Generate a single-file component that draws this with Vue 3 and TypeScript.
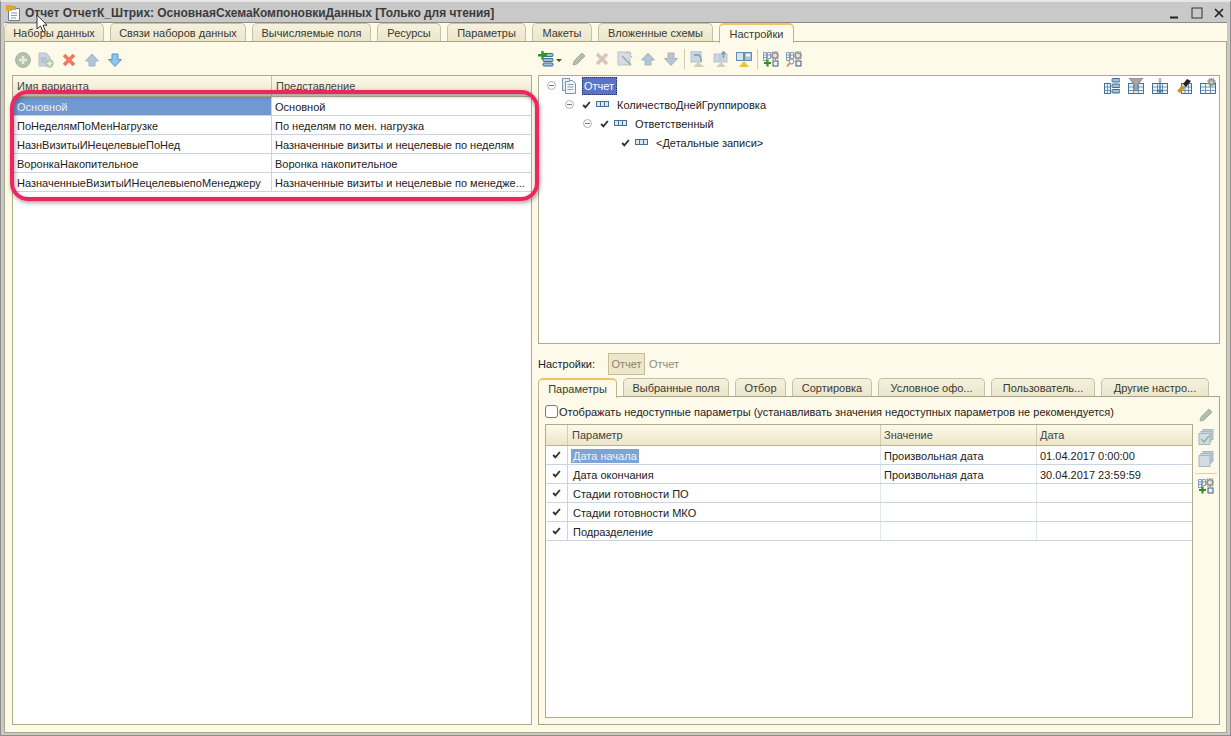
<script setup lang="ts">
const mainTabs = [
  { t: 'Наборы данных', w: 100 }, { t: 'Связи наборов данных', w: 136 }, { t: 'Вычисляемые поля', w: 119 },
  { t: 'Ресурсы', w: 64 }, { t: 'Параметры', w: 79 }, { t: 'Макеты', w: 60 }, { t: 'Вложенные схемы', w: 115 },
  { t: 'Настройки', w: 75, on: true },
]
const subTabs = [
  { t: 'Параметры', w: 79, on: true }, { t: 'Выбранные поля', w: 106 }, { t: 'Отбор', w: 51 }, { t: 'Сортировка', w: 80 },
  { t: 'Условное офо...', w: 107 }, { t: 'Пользователь...', w: 104 }, { t: 'Другие настро...', w: 108 },
]
const variants = [
  ['Основной', 'Основной'],
  ['ПоНеделямПоМенНагрузке', 'По неделям по мен. нагрузка'],
  ['НазнВизитыИНецелевыеПоНед', 'Назначенные визиты и нецелевые по неделям'],
  ['ВоронкаНакопительное', 'Воронка накопительное'],
  ['НазначенныеВизитыИНецелевыепоМенеджеру', 'Назначенные визиты и нецелевые по менедже...'],
]
const params = [
  ['Дата начала', 'Произвольная дата', '01.04.2017 0:00:00'],
  ['Дата окончания', 'Произвольная дата', '30.04.2017 23:59:59'],
  ['Стадии готовности ПО', '', ''],
  ['Стадии готовности МКО', '', ''],
  ['Подразделение', '', ''],
]
const leftTools = ['add', 'adddoc', 'del', 'up', 'down']
const treeTools = ['cols', 'filter', 'sortc', 'brush', 'gearc']
</script>

<template>
  <div class="win">
    <svg class="sprite" width="0" height="0">
      <symbol id="add" viewBox="0 0 16 16"><circle cx="8" cy="8" r="7.4" fill="#b5c2ab" stroke="#a3b09a"/><path d="M8 4v8M4 8h8" stroke="#e6ebdf" stroke-width="2.4"/></symbol>
      <symbol id="adddoc" viewBox="0 0 16 16"><path d="M1 1h7l4 4v9H1z" fill="#c6d2dc" stroke="#b4c0ca"/><path d="M3 6h6M3 8h5M3 10h4" stroke="#a9b7c4"/><circle cx="11.5" cy="11.5" r="4.2" fill="#b5c5ab"/><path d="M11.5 9v5M9 11.5h5" stroke="#eef2e8" stroke-width="1.5"/></symbol>
      <symbol id="del" viewBox="0 0 16 16"><path d="M3 3l10 10M13 3L3 13" stroke="#ef7a62" stroke-width="3.6"/></symbol>
      <symbol id="up" viewBox="0 0 16 16"><path d="M8 2l6.5 7H11v5H5V9H1.500z" fill="#b4c6d4" stroke="#a0b4c4"/></symbol>
      <symbol id="down" viewBox="0 0 16 16"><path d="M8 14.500L1.500 7.500H5V2h6v5.500h3.500z" fill="#90c4ec" stroke="#5a96c8"/></symbol>
      <symbol id="gdown" viewBox="0 0 16 16"><path d="M8 14.500L1.500 7.500H5V2h6v5.500h3.500z" fill="#b7c6d2" stroke="#a3b4c2"/></symbol>
      <symbol id="addgrp" viewBox="0 0 16 16"><rect x="5" y="2.500" width="10" height="3" rx="1" fill="#9cc0dc" stroke="#3d6c94"/><rect x="5" y="7.500" width="10" height="3" rx="1" fill="#9cc0dc" stroke="#3d6c94"/><rect x="5" y="12" width="10" height="3" rx="1" fill="#9cc0dc" stroke="#3d6c94"/><path d="M4.500 0v8.500M0 4.200h9" stroke="#2a9a24" stroke-width="2.400"/></symbol>
      <symbol id="pencil" viewBox="0 0 16 16"><path d="M2 14l1-4 8-8 3 3-8 8z" fill="#b2bfa8" stroke="#a4b09a"/></symbol>
      <symbol id="gx" viewBox="0 0 16 16"><path d="M3 3l10 10M13 3L3 13" stroke="#d5c4b8" stroke-width="3.400"/></symbol>
      <symbol id="wand" viewBox="0 0 16 16"><rect x="1" y="1" width="12" height="13" fill="#d5dde2" stroke="#b9c3ca"/><path d="M5 5l9 9" stroke="#9aa6b0" stroke-width="1.400"/><path d="M13 2l1 1M15 5l-1 1M10 1l1 1" stroke="#dca09a" stroke-width="1.400"/></symbol>
      <symbol id="undo" viewBox="0 0 16 16"><rect x="1" y="0" width="10" height="11" fill="#c8d6e0" stroke="#b5c4d0"/><path d="M4 4h5l2 3v4" fill="none" stroke="#7f98ac" stroke-width="1.300"/><path d="M8 11l-5 5h12z" fill="#d4cfb8"/></symbol>
      <symbol id="book" viewBox="0 0 16 16"><rect x="1" y="3" width="6" height="8" fill="#c8d6e0" stroke="#b5c4d0"/><rect x="8" y="3" width="6" height="8" fill="#c8d6e0" stroke="#b5c4d0"/><path d="M10.500 7V2M8.500 3l2-2.500 2 2.500" fill="none" stroke="#7f98ac" stroke-width="1.300"/><path d="M8 11l-5 5h10z" fill="#d4cfb8"/></symbol>
      <symbol id="save" viewBox="0 0 16 16"><rect x="0.500" y="1.500" width="7" height="8" fill="#d4e4f0" stroke="#6a8aa6"/><rect x="8.500" y="1.500" width="7" height="8" fill="#a8c4da" stroke="#6a8aa6"/><rect x="10" y="3" width="4" height="2.500" fill="#eef4f8"/><path d="M8 10l-5 6h10z" fill="#f0c040"/></symbol>
      <symbol id="gearadd" viewBox="0 0 16 16"><path d="M.5 1.500h3v8h-3zM4.500 1.500h3v6h-3zM.5 4h3M.5 6.500h3M4.500 4h3" fill="#f2f6f9" stroke="#6a8aa8" stroke-width=".8"/><rect x="10" y="10" width="5" height="5" fill="#eef3f7" stroke="#3a5a7c"/><circle cx="12" cy="4.500" r="2.800" fill="#e4e4e4" stroke="#949494" stroke-width="1.600"/><circle cx="12" cy="4.500" r="4.100" fill="none" stroke="#949494" stroke-width="1.400" stroke-dasharray="1.300 1.270"/><path d="M4.500 8.500v7M1 12h7" stroke="#28961e" stroke-width="2.200"/></symbol>
      <symbol id="gearfind" viewBox="0 0 16 16"><path d="M.5 1.500h3v8h-3zM4.500 1.500h3v6h-3zM.5 4h3M.5 6.500h3M4.500 4h3" fill="#f2f6f9" stroke="#6a8aa8" stroke-width=".8"/><rect x="10" y="10" width="5" height="5" fill="#eef3f7" stroke="#3a5a7c"/><circle cx="12" cy="4.500" r="2.800" fill="#e4e4e4" stroke="#949494" stroke-width="1.600"/><circle cx="12" cy="4.500" r="4.100" fill="none" stroke="#949494" stroke-width="1.400" stroke-dasharray="1.300 1.270"/><circle cx="5.500" cy="10.500" r="2.500" fill="#eef2f4" stroke="#a08060"/><path d="M3.500 12.500L1 15.500" stroke="#c08a5c" stroke-width="1.600"/></symbol>
      <symbol id="cols" viewBox="0 0 16 16"><rect x="0.500" y="5.500" width="6" height="10" fill="#eef3f7" stroke="#46719a"/><path d="M3.500 5.500v10M.5 9h6M.5 12.500h6" stroke="#46719a" stroke-width=".7"/><rect x="8" y="0.500" width="8" height="3.500" rx="1" fill="#9cc0dc" stroke="#3d6c94"/><rect x="8" y="6" width="8" height="3.500" rx="1" fill="#9cc0dc" stroke="#3d6c94"/><rect x="8" y="11.500" width="8" height="3.500" rx="1" fill="#9cc0dc" stroke="#3d6c94"/></symbol>
      <symbol id="filter" viewBox="0 0 16 16"><rect x="0.500" y="5.500" width="15" height="10" fill="#eef3f7" stroke="#46719a"/><path d="M5.500 5.500v10M10.500 5.500v10M.5 9h15M.5 12.500h15" stroke="#46719a" stroke-width=".7"/><path d="M1 0h14L9.500 7v6h-3V7z" fill="#a6a6a6" stroke="#8a8a8a"/></symbol>
      <symbol id="sortc" viewBox="0 0 16 16"><rect x="0.500" y="5.500" width="15" height="10" fill="#eef3f7" stroke="#46719a"/><path d="M5.500 5.500v10M10.500 5.500v10M.5 9h15M.5 12.500h15" stroke="#46719a" stroke-width=".7"/><path d="M8 3v11M5.500 11.500L8 14.500l2.500-3" fill="none" stroke="#3878b0" stroke-width="1.300"/><path d="M6.500 0l3 3M9.500 0l-3 3" stroke="#777" stroke-width=".8"/></symbol>
      <symbol id="brush" viewBox="0 0 16 16"><rect x="5.500" y="5.500" width="10" height="10" fill="#eef3f7" stroke="#46719a"/><path d="M9 5.500v10M12.500 5.500v10M5.500 9h10M5.500 12.500h10" stroke="#46719a" stroke-width=".7"/><path d="M1 13l5-6 3 3-5 5z" fill="#c8962c"/><path d="M7 6l4-5 4 2-5 6z" fill="#222"/></symbol>
      <symbol id="gearc" viewBox="0 0 16 16"><rect x="0.500" y="5.500" width="15" height="10" fill="#eef3f7" stroke="#46719a"/><path d="M5.500 5.500v10M10.500 5.500v10M.5 9h15M.5 12.500h15" stroke="#46719a" stroke-width=".7"/><circle cx="11.500" cy="4" r="2.600" fill="#c8c8c8" stroke="#8f8f8f" stroke-width="1.500"/><circle cx="11.500" cy="4" r="3.700" fill="none" stroke="#8f8f8f" stroke-width="1.300" stroke-dasharray="1.200 1.120"/></symbol>
      <symbol id="doc" viewBox="0 0 16 16"><path d="M4.500 2.500h7l3 3v10h-10z" fill="#f2f6f9" stroke="#7b94ac"/><path d="M1.500 0.500h7v3h-4v9h-3z" fill="#e6edf3" stroke="#7b94ac"/><path d="M6.500 6.500h6M6.500 9h6M6.500 11.500h6" stroke="#8aa2b8"/></symbol>
      <symbol id="field" viewBox="0 0 13 6"><rect x="0.500" y="0.500" width="12" height="5" fill="#dbe7f1" stroke="#4a6f94"/><path d="M4.500 .5v5M8.500 .5v5" stroke="#4a6f94"/></symbol>
      <symbol id="chk" viewBox="0 0 12 10"><path d="M1.500 5l3 3 6-7" fill="none" stroke="#333" stroke-width="2.500"/></symbol>
      <symbol id="stack" viewBox="0 0 16 16"><rect x="5" y="0.500" width="10" height="10" fill="#bdcdd6" stroke="#a6b8c2"/><rect x="3" y="2.500" width="10" height="10" fill="#c8d6dd" stroke="#a6b8c2"/><rect x="1" y="4.500" width="11" height="11" fill="#d1dde3" stroke="#a6b8c2"/></symbol>
      <symbol id="stackchk" viewBox="0 0 16 16"><rect x="5" y="0.500" width="10" height="10" fill="#bdcdd6" stroke="#a6b8c2"/><rect x="3" y="2.500" width="10" height="10" fill="#c8d6dd" stroke="#a6b8c2"/><rect x="1" y="4.500" width="11" height="11" fill="#d1dde3" stroke="#a6b8c2"/><path d="M3 10l3 3 5-6" fill="none" stroke="#9ab78e" stroke-width="1.600"/></symbol>
    </svg>

    <header class="titlebar">
      <svg class="tb-icon" viewBox="0 0 16 16"><path d="M2.500 3.500h11v12h-11z" fill="#fff" stroke="#6a7c8c"/><rect x="0" y="0" width="6" height="6" fill="#e2a834"/><rect x="6" y="1" width="4" height="4" fill="#caa64c"/><path d="M5 8h6M5 10.500h6M5 13h5" stroke="#8a9aa8"/></svg>
      <span class="tb-title">Отчет ОтчетК_Штрих: ОсновнаяСхемаКомпоновкиДанных [Только для чтения]</span>
      <div class="tb-btns">
        <svg viewBox="0 0 12 12" class="wb"><rect x="1" y="9.500" width="8" height="2" fill="#222"/></svg>
        <svg viewBox="0 0 12 12" class="wb"><rect x="1" y="1" width="10" height="10" fill="none" stroke="#333"/></svg>
        <svg viewBox="0 0 12 12" class="wb"><path d="M2 2l8 8M10 2l-8 8" stroke="#222" stroke-width="1.700"/></svg>
      </div>
    </header>

    <div class="frame">
      <nav class="tabs main-tabs">
        <div v-for="t in mainTabs" :key="t.t" class="tab" :class="{ on: t.on }" :style="{ width: t.w + 'px' }">{{ t.t }}</div>
      </nav>
      <div class="panel main-panel">
        <section class="left">
          <div class="toolbar ltb">
            <svg v-for="i in leftTools" :key="i" class="ic"><use :href="'#' + i" /></svg>
          </div>
          <div class="vtable box">
            <div class="vhead">
              <div class="vh c1">Имя варианта</div>
              <div class="vh">Представление</div>
            </div>
            <div v-for="(r, i) in variants" :key="r[0]" class="vrow">
              <div class="vc c1" :class="{ sel: i === 0 }">{{ r[0] }}</div>
              <div class="vc">{{ r[1] }}</div>
            </div>
          </div>
        </section>

        <section class="right">
          <div class="toolbar rtb">
            <svg class="ic"><use href="#addgrp" /></svg>
            <span class="caret"></span>
            <svg class="ic t1"><use href="#pencil" /></svg>
            <svg class="ic t1"><use href="#gx" /></svg>
            <svg class="ic t1"><use href="#wand" /></svg>
            <svg class="ic t1"><use href="#up" /></svg>
            <svg class="ic t1"><use href="#gdown" /></svg>
            <span class="sep"></span>
            <svg class="ic t1"><use href="#undo" /></svg>
            <svg class="ic t1"><use href="#book" /></svg>
            <svg class="ic t1"><use href="#save" /></svg>
            <span class="sep"></span>
            <svg class="ic t1"><use href="#gearadd" /></svg>
            <svg class="ic t1"><use href="#gearfind" /></svg>
          </div>

          <div class="tree box">
            <div class="tnode n0">
              <span class="toggle"></span>
              <svg class="ic doc"><use href="#doc" /></svg>
              <span class="tsel">Отчет</span>
              <div class="tree-tools">
                <svg v-for="i in treeTools" :key="i" class="ic"><use :href="'#' + i" /></svg>
              </div>
            </div>
            <div class="tnode n1">
              <span class="toggle"></span>
              <svg class="chk"><use href="#chk" /></svg>
              <svg class="fld"><use href="#field" /></svg>
              <span class="tl">КоличествоДнейГруппировка</span>
            </div>
            <div class="tnode n2">
              <span class="toggle"></span>
              <svg class="chk"><use href="#chk" /></svg>
              <svg class="fld"><use href="#field" /></svg>
              <span class="tl">Ответственный</span>
            </div>
            <div class="tnode n3">
              <svg class="chk"><use href="#chk" /></svg>
              <svg class="fld"><use href="#field" /></svg>
              <span class="tl">&lt;Детальные записи&gt;</span>
            </div>
          </div>

          <div class="setrow">
            <span class="setlab">Настройки:</span>
            <span class="setbtn">Отчет</span>
            <span class="setdim">Отчет</span>
          </div>

          <nav class="tabs sub-tabs">
            <div v-for="t in subTabs" :key="t.t" class="tab" :class="{ on: t.on }" :style="{ width: t.w + 'px' }">{{ t.t }}</div>
          </nav>
          <div class="panel sub-panel">
            <div class="sub-main">
              <label class="cbrow">
                <span class="cb"></span>
                <span class="cbtext">Отображать недоступные параметры (устанавливать значения недоступных параметров не рекомендуется)</span>
              </label>
              <div class="ptable box">
                <div class="prow phead">
                  <div class="pc"></div>
                  <div class="pc">Параметр</div>
                  <div class="pc">Значение</div>
                  <div class="pc">Дата</div>
                </div>
                <div v-for="(r, i) in params" :key="r[0]" class="prow">
                  <div class="pc mark"><svg class="chk"><use href="#chk" /></svg></div>
                  <div class="pc pname"><span :class="{ psel: i === 0 }">{{ r[0] }}</span></div>
                  <div class="pc">{{ r[1] }}</div>
                  <div class="pc">{{ r[2] }}</div>
                </div>
              </div>
            </div>
            <div class="side">
              <svg class="ic"><use href="#pencil" /></svg>
              <svg class="ic"><use href="#stackchk" /></svg>
              <svg class="ic"><use href="#stack" /></svg>
              <span class="hsep"></span>
              <svg class="ic"><use href="#gearadd" /></svg>
            </div>
          </div>
        </section>
      </div>
    </div>

    <div class="annot"></div>
    <svg class="cursor" viewBox="0 0 12 19"><path d="M1 1v14l3.500-3 2.500 6 2.500-1-2.500-5.800H11z" fill="#fff" stroke="#333" stroke-width="1"/></svg>
  </div>
</template>

<style scoped>
.win {
  position: relative;
  width: 1231px;
  height: 736px;
  overflow: hidden;
  background: #c9c9c9;
  display: flex;
  flex-direction: column;
  font: 11px "Liberation Sans", Arial, sans-serif;
  color: #222;
  box-sizing: border-box;
  padding: 0 3px 2px 3px;
  border-top: 2px solid #e6e6e6;
  border-left: 1px solid #8e8e8e;
  border-right: 1px solid #8e8e8e;
  border-bottom: 1px solid #8e8e8e;
}
.sprite { position: absolute; }
.titlebar {
  box-sizing: border-box;
  height: 20px;
  padding-top: 2px;
  display: flex;
  align-items: center;
  flex: none;
}
.tb-icon { width: 16px; height: 16px; margin-left: 2px; margin-right: 3px; }
.tb-title { font-size: 12px; font-weight: 700; color: #3c3c3c; letter-spacing: -0.04px; }
.tb-btns { margin-left: auto; display: flex; gap: 10px; padding-right: 2px; align-items: center; }
.wb { width: 12px; height: 12px; }

.frame { flex: 1; min-height: 0; display: flex; flex-direction: column; background: #fdfaea; }
.main-tabs { background: #fdfaea; border-top: 1px solid #8c8c80; }
.tabs { display: flex; gap: 0; flex: none; height: 18px; }
.tab {
  box-sizing: border-box;
  height: 19px;
  display: flex;
  align-items: center;
  justify-content: center;
  white-space: nowrap;
  color: #3a3a32;
  background: linear-gradient(#f5f1de, #eae5c9);
  border: 1px solid #c6c1a4;
  border-bottom: none;
  border-radius: 5px 5px 0 0;
  background-clip: padding-box;
  margin-left: 6px;
}
.main-tabs .tab:first-child { margin-left: 0; }
.tab.on {
  background: #fdfaea;
  position: relative;
  z-index: 2;
  height: 20px;
  border-color: #bdb796;
  border-top: 2px solid #f2c46a;
}
.panel {
  box-sizing: border-box;
  border: 1px solid #aaa585;
  background: #fdfaea;
}
.main-panel {
  flex: 1;
  min-height: 0;
  display: flex;
  padding: 0 6px 7px 7px;
  gap: 6px;
}
.box { box-sizing: border-box; border: 1px solid #b0aa8c; background: #fff; }
.left { width: 520px; flex: none; display: flex; flex-direction: column; }
.toolbar { box-sizing: border-box; height: 33px; display: flex; align-items: center; flex: none; }
.ic { width: 16px; height: 16px; flex: none; }
.ltb { gap: 7px; padding-left: 3px; padding-top: 3px; }
.vtable { flex: 1; min-height: 0; }
.vhead, .vrow { display: grid; grid-template-columns: 259px 1fr; }
.vhead { height: 21px; background: linear-gradient(#fdfaea, #ece5c8); border-bottom: 1px solid #b8b292; box-sizing: border-box; }
.vh { padding: 3px 0 0 4px; color: #444; line-height: 14px; }
.vh.c1 { border-right: 1px solid #c8c2a4; }
.vrow { height: 19px; box-sizing: border-box; border-bottom: 1px solid #c9d5e2; line-height: 20px; }
.vc { padding-left: 3px; white-space: nowrap; overflow: hidden; color: #222; }
.vc.c1 { border-right: 1px solid #c9d5e2; padding-left: 4px; }
.vc.sel { background: #6f99cf; color: #e8eff8; }

.right { flex: 1; min-width: 0; display: flex; flex-direction: column; }
.rtb { padding-left: 0; padding-top: 1px; }
.caret { width: 0; height: 0; border: 3px solid transparent; border-top: 3px solid #5a4a10; border-bottom: none; margin-left: 2px; margin-right: 2px; margin-top: 2px; }
.t1 { margin-left: 7px; }
.sep { width: 1px; height: 20px; background: #cfcab0; margin-left: 5px; }
.sep + .t1 { margin-left: 5px; }
.tree { height: 269px; flex: none; }
.tnode { height: 19px; display: flex; align-items: center; white-space: nowrap; }
.n0 { padding-left: 8px; }
.n1 { padding-left: 26px; }
.n2 { padding-left: 44px; }
.n3 { padding-left: 82px; }
.toggle {
  width: 9px; height: 9px; border: 1px solid #aab2ba; border-radius: 50%; box-sizing: border-box; flex: none;
  background: linear-gradient(90deg, transparent 20%, #777 20% 80%, transparent 80%) center / 100% 1px no-repeat;
}
.doc { margin: 0 5px 0 5px; }
.tsel { background: #5a75c8; color: #fff; outline: 1px dotted #28306a; outline-offset: -1px; padding: 0 2px; height: 18px; line-height: 18px; width: 31px; }
.tree-tools { margin-left: auto; display: flex; gap: 8px; padding-right: 3px; }
.chk { width: 9px; height: 8px; flex: none; }
.n1 .chk, .n2 .chk { margin-left: 8px; }
.fld { width: 13px; height: 6px; margin: 0 8px 2px 5px; flex: none; }
.setrow { display: flex; align-items: center; height: 22px; margin-top: 9px; flex: none; }
.setlab { width: 70px; }
.setbtn { box-sizing: border-box; width: 37px; height: 22px; border: 1px solid #c6bd94; background: #ece6cb; color: #87846f; text-align: center; line-height: 21px; }
.setdim { color: #8e8b78; margin-left: 4px; }
.sub-tabs { margin-top: 3px; }
.sub-tabs .tab:first-child { margin-left: 0; }
.sub-panel { flex: 1; min-height: 0; display: flex; padding: 0 0 6px 6px; }
.sub-main { flex: 1; min-width: 0; display: flex; flex-direction: column; }
.cbrow { box-sizing: border-box; padding-top: 2px; height: 27px; display: flex; align-items: center; flex: none; }
.cb { width: 13px; height: 13px; box-sizing: border-box; border: 1px solid #7d7a68; border-radius: 3px; background: #fff; margin-right: 1px; flex: none; }
.cbtext { white-space: nowrap; }
.ptable { flex: 1; min-height: 0; }
.prow { display: grid; grid-template-columns: 22px 313px 156px 1fr; height: 19px; box-sizing: border-box; border-bottom: 1px solid #c9d5e2; line-height: 20px; }
.phead { height: 21px; background: linear-gradient(#fdfaea, #ece5c8); border-bottom: 1px solid #b8b292; line-height: 20px; color: #444; }
.pc { padding-left: 3px; border-right: 1px solid #dfe6ee; white-space: nowrap; overflow: hidden; }
.phead .pc { border-right-color: #d3cdb0; }
.phead .pc:nth-child(2) { padding-left: 4px; }
.pc:last-child { border-right: none; }
.pname { padding-left: 5px; }
.mark { padding-left: 6px; display: flex; align-items: center; border-right-color: #c9d5e2; }
.psel { background: #7ea3d4; color: #f0f5fb; display: inline-block; line-height: 14px; padding: 0 2px; margin-left: -2px; }
.side { width: 26px; flex: none; display: flex; flex-direction: column; align-items: center; padding-top: 10px; gap: 6px; }
.hsep { width: 22px; height: 1px; background: #d6d2ba; margin-bottom: -2px; }

.annot {
  position: absolute;
  left: 9px;
  top: 88px;
  width: 529px;
  height: 111px;
  box-sizing: border-box;
  border: 4px solid #ee2560;
  border-radius: 18px;
  box-shadow: 1px 2px 4px rgba(0,0,0,.35), inset 1px 2px 4px rgba(0,0,0,.35);
  pointer-events: none;
}
.cursor { position: absolute; left: 35px; top: 12px; width: 12px; height: 19px; }
</style>
